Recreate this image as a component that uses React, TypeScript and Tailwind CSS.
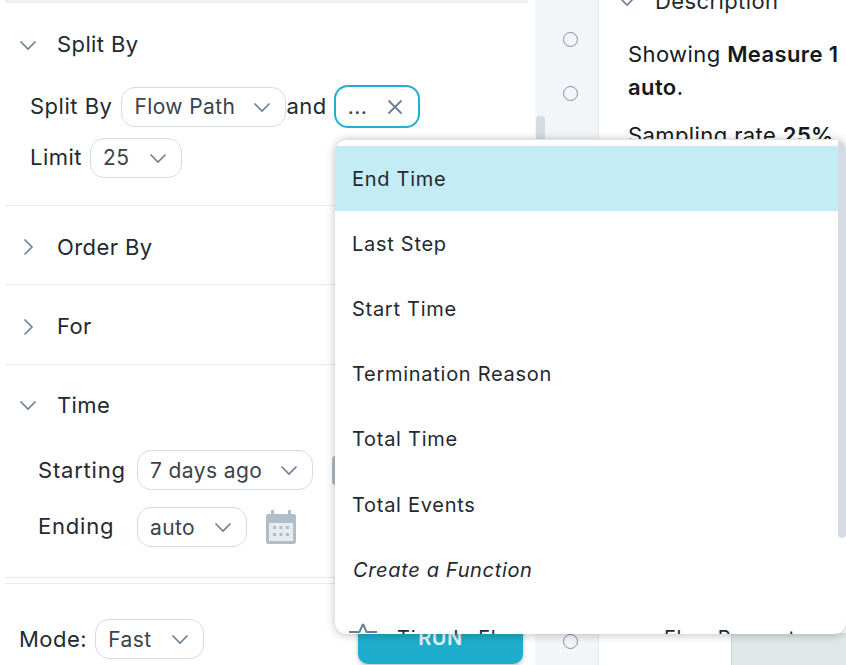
import React from "react";

const font = { fontFamily: "Inter, 'Noto Sans', sans-serif" };

function Chev({ className = "", open = true }: { className?: string; open?: boolean }) {
  return (
    <svg viewBox="0 0 18 18" className={"shrink-0 " + className} fill="none" stroke="#6b7f95" strokeWidth="1.6">
      {open ? <path d="M1.500 5.500 9 13l7.500-7.500" /> : <path d="M5.500 1.500 13 9l-7.500 7.500" />}
    </svg>
  );
}

function Select({ label, w }: { label: string; w: string }) {
  return (
    <div className={"flex h-[40px] items-center justify-between rounded-[14px] border border-[#d3dce5] bg-white pl-[12px] pr-[14px] text-[21px] tracking-[0.4px] text-[#3b434b] " + w}>
      <span className="pt-[1px]">{label}</span>
      <Chev className="h-[18px] w-[18px]" />
    </div>
  );
}

function Header({ label, open, h }: { label: string; open: boolean; h: string }) {
  return (
    <div className={"flex shrink-0 items-center pl-[14px] text-[22px] tracking-[0.4px] text-[#23292f] " + h}>
      <div className="flex w-[38px] items-center">
        <Chev open={open} className="h-[18px] w-[18px]" />
      </div>
      <span>{label}</span>
    </div>
  );
}

function Radio() {
  return <div className="h-[15px] w-[15px] rounded-full border border-[#7f90a3] bg-transparent" />;
}

const items = ["End Time", "Last Step", "Start Time", "Termination Reason", "Total Time", "Total Events"];

export default function App() {
  return (
    <div style={font} className="relative flex h-[665px] w-[846px] overflow-hidden bg-white text-[#1a1f24]">
      {/* left panel */}
      <div className="relative flex h-full w-[535px] shrink-0 flex-col pl-[5px] pr-[7px]">
        <div className="h-[3px] shrink-0 bg-[#eef2f6]" />
        <Header label="Split By" open h="h-[84px] pb-[1px]" />
        <div className="flex h-[39px] shrink-0 items-center pl-[25px] text-[22px] tracking-[0.5px] text-[#23292f]">
          <span className="mr-[9px]">Split By</span>
          <Select label="Flow Path" w="w-[165px]" />
          <span className="mr-[7px]">and</span>
          <div className="flex h-[43px] w-[86px] items-center justify-between rounded-[14px] border-2 border-[#22b0cf] bg-white pl-[12px] pr-[15px] text-[21px] text-[#3b434b]">
            <span>...</span>
            <svg viewBox="0 0 16 16" className="h-[16px] w-[16px]" fill="none" stroke="#6b7f95" strokeWidth="1.8">
              <path d="M1.500 1.500l13 13M14.500 1.500l-13 13" />
            </svg>
          </div>
        </div>
        <div className="mt-[12px] flex h-[39px] shrink-0 items-center pl-[25px] text-[22px] tracking-[0.5px] text-[#23292f]">
          <span className="mr-[8px]">Limit</span>
          <Select label="25" w="w-[92px]" />
        </div>
        <div className="mt-[28px] h-px shrink-0 bg-[#e8ecf0]" />
        <Header label="Order By" open={false} h="h-[78px] pt-[4px]" />
        <div className="h-px shrink-0 bg-[#e8ecf0]" />
        <Header label="For" open={false} h="h-[79px] pt-[4px]" />
        <div className="h-px shrink-0 bg-[#e8ecf0]" />
        <Header label="Time" open h="h-[85px] pb-[5px]" />
        <div className="flex h-[40px] shrink-0 items-center pl-[33px] text-[22px] tracking-[0.8px] text-[#23292f]">
          <span className="w-[99px]">Starting</span>
          <Select label="7 days ago" w="w-[176px]" />
          <div className="ml-[19px] h-[29px] w-[8px] rounded-[3px] bg-[#b0bdca]" />
        </div>
        <div className="mt-[17px] flex h-[40px] shrink-0 items-center pl-[33px] text-[22px] tracking-[0.8px] text-[#23292f]">
          <span className="w-[99px] pb-[1px]">Ending</span>
          <Select label="auto" w="w-[110px]" />
          <svg viewBox="0 0 30 34" className="ml-[19px] h-[34px] w-[30px]" fill="#b0bdca">
            <path d="M5 0h3v4h14V0h3v4h2.500A2.500 2.500 0 0 1 30 6.500v25a2.500 2.500 0 0 1-2.500 2.500h-25A2.500 2.500 0 0 1 0 31.500v-25A2.500 2.500 0 0 1 2.500 4H5z" />
            <path fill="#e6ebf0" d="M3 13h24v18H3z" />
            <path d="M7 16h3v3H7zM13.500 16h3v3h-3zM20 16h3v3h-3zM7 23h3v3H7zM13.500 23h3v3h-3zM20 23h3v3h-3z" />
          </svg>
        </div>
        <div className="mt-[30px] h-px shrink-0 bg-[#e8ecf0]" />
        <div className="mt-[5px] h-px shrink-0 bg-[#e8ecf0]" />
        {/* bottom bar */}
        <div className="flex flex-1 items-end pb-[6px] pl-[14px] pr-[5px] text-[22px] tracking-[0.5px] text-[#23292f]">
          <div className="flex items-center">
            <span className="mr-[8px]">Mode:</span>
            <Select label="Fast" w="w-[109px]" />
          </div>
          <div className="ml-auto -mb-[5px] flex h-[50px] w-[165px] items-center justify-center rounded-[10px] bg-[#1fadcd] pb-[2px] text-[20px] font-semibold tracking-[0.5px] text-[#e4f5f9] shadow-[0_2px_4px_rgba(0,0,0,0.25)]">
            RUN
          </div>
        </div>
      </div>

      {/* rail */}
      <div className="flex h-full w-[64px] shrink-0 flex-col items-center border-r border-[#e3e9ef] bg-[#f3f6f9] pl-[7px] pt-[32px]">
        <Radio />
        <div className="mt-[39px]">
          <Radio />
        </div>
        <div className="mt-auto mb-[16px]">
          <Radio />
        </div>
      </div>

      {/* right panel */}
      <div className="flex h-full min-w-0 flex-1 flex-col">
        <div className="-mt-[9px] flex h-[20px] shrink-0 items-center pl-[19px] text-[22px] tracking-[0.4px] text-[#23292f]">
          <div className="w-[37px]">
            <Chev className="h-[18px] w-[18px]" />
          </div>
          <span>Description</span>
        </div>
        <div className="mt-[27px] w-[300px] pl-[29px] text-[22px] leading-[33px] tracking-[0.4px] text-[#15191d]">
          <p>
            Showing <b className="font-semibold">Measure 1</b>
            <br />
            <b className="font-semibold">auto</b>.
          </p>
          <p className="mt-[15px]">
            Sampling rate <b className="font-semibold">25%</b>
          </p>
        </div>
        <div className="mt-auto ml-[132px] h-[32px] border-l border-[#c9d2de] bg-[#dfe8e6]" />
      </div>

      {/* scrollbar of left panel */}
      <div className="absolute left-[536px] top-[116px] h-[60px] w-[9px] rounded-[4px] bg-[#d5dbe2]" />

      {/* dropdown */}
      <div className="absolute left-[335px] top-[139px] h-[495px] w-[511px] overflow-hidden rounded-[12px] border-t border-[#dfe3e7] bg-white shadow-[0_1px_10px_rgba(0,0,0,0.25)]">
        <div className="h-[6px]" />
        {items.map((t, i) => (
          <div
            key={t}
            className={"flex h-[65.2px] items-center pl-[17px] text-[20px] tracking-[0.72px] text-[#23292f] " + (i === 0 ? "bg-[#c4ecf4]" : "")}
          >
            {t}
          </div>
        ))}
        <div className="flex h-[65.2px] items-center pl-[18px] text-[20px] italic tracking-[0.65px] text-[#23292f]">
          Create a Function
        </div>
        <div className="flex h-[65px] items-start pl-[17px] pt-[21px] text-[20px] tracking-[0.72px] text-[#23292f]">
          <svg viewBox="0 0 28 24" className="-ml-[3px] -mt-[1px] mr-[20px] h-[24px] w-[28px] shrink-0" fill="none" stroke="#6b7f95" strokeWidth="2">
            <path d="M14 2l3.500 8H28M14 2l-3.500 8H0" />
          </svg>
          <span className="w-[267px] shrink-0">Time In Flow</span>
          <span>Flow Percent</span>
        </div>
        <div className="absolute right-0 top-0 h-[398px] w-[8px] rounded-[4px] bg-[#d5dbe2]" />
      </div>
    </div>
  );
}
